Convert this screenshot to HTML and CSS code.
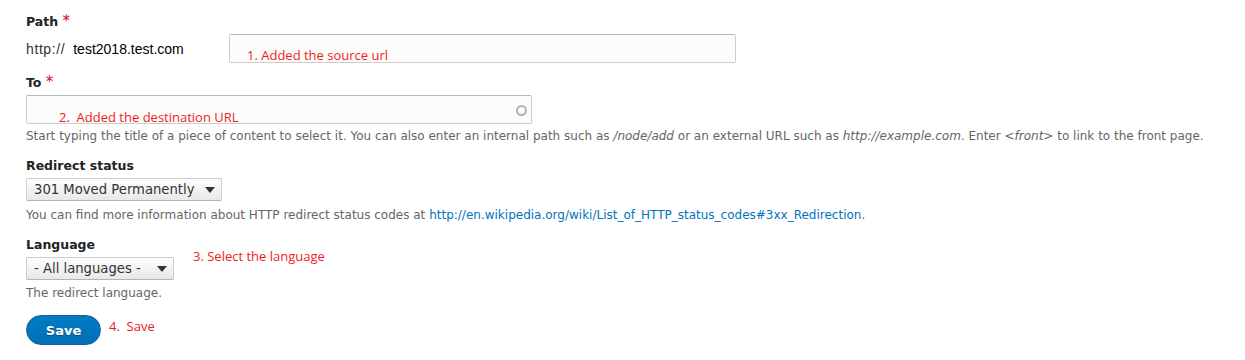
FILE: index.html
```html
<!DOCTYPE html>
<html lang="en">
<head>
  <meta charset="UTF-8">
  <meta name="viewport" content="width=device-width, initial-scale=1.0">
  <title>Add redirect</title>
  <link rel="stylesheet" href="styles.css">
</head>
<body>
  <form class="redirect-form">
    <div class="form-item">
      <label class="label" for="source">Path <span class="req">*</span></label>
      <div class="source-row">
        <span class="prefix"><span class="scheme">http://</span><span class="host">test2018.test.com</span></span>
        <div class="field-wrap">
          <input type="text" id="source" class="text-input source-input">
          <span class="note note-source">1. Added the source url</span>
        </div>
      </div>
    </div>

    <div class="form-item item-to">
      <label class="label" for="dest">To <span class="req">*</span></label>
      <div class="field-wrap">
        <input type="text" id="dest" class="text-input dest-input">
        <span class="throbber"></span>
        <span class="note note-dest">2.&nbsp; Added the destination URL</span>
      </div>
      <div class="description">Start typing the title of a piece of content to select it. You can also enter an internal path such as <em>/node/add</em> or an external URL such as <em>http://example.com</em>. Enter <em>&lt;front&gt;</em> to link to the front page.</div>
    </div>

    <div class="form-item item-status">
      <label class="label" for="status">Redirect status</label>
      <div class="select status-select">301 Moved Permanently <span class="arrow"></span></div>
      <div class="description">You can find more information about HTTP redirect status codes at <a href="#">http://en.wikipedia.org/wiki/List_of_HTTP_status_codes#3xx_Redirection</a>.</div>
    </div>

    <div class="form-item item-lang">
      <label class="label" for="lang">Language</label>
      <div class="select-row">
        <div class="select lang-select">- All languages - <span class="arrow"></span></div>
        <span class="note note-lang">3. Select the language</span>
      </div>
      <div class="description">The redirect language.</div>
    </div>

    <div class="actions">
      <button type="button" class="button-primary">Save</button>
      <span class="note note-save">4.&nbsp; Save</span>
    </div>
  </form>
</body>
</html>
```

FILE: styles.css
```css
body {
  margin: 0;
  background-color: #ffffff;
  font-family: "DejaVu Sans", "Lucida Grande", sans-serif;
  color: #333;
}
.redirect-form {
  padding: 13px 26px 0 26px;
}
.label {
  display: block;
  font-weight: bold;
  font-size: 12.5px;
  line-height: 16px;
  color: #222;
}
.req {
  color: #e0001b;
  font-size: 15px;
  font-weight: normal;
}
.source-row {
  display: flex;
  align-items: center;
  margin-top: 4px;
  height: 29px;
}
.prefix {
  width: 203px;
  font-family: "Liberation Sans", Arial, sans-serif;
  font-size: 14px;
  color: #333;
}
.scheme {
  letter-spacing: 0.6px;
}
.host {
  color: #000;
  margin-left: 8px;
}
.field-wrap {
  position: relative;
  display: inline-block;
}
.text-input {
  display: block;
  box-sizing: border-box;
  height: 29px;
  background-color: #fcfcfa;
  border: 1px solid #ccc;
  border-top-color: #b8b8b8;
  border-radius: 2px;
  padding: 4px 8px;
  margin: 0;
}
.source-input {
  width: 507px;
}
.dest-input {
  width: 506px;
}
.item-to {
  margin-top: 11px;
}
.item-to .label {
  margin-bottom: 4px;
}
.item-to .field-wrap {
  display: block;
  width: 506px;
}
.throbber {
  position: absolute;
  right: 5px;
  top: 10px;
  width: 7px;
  height: 7px;
  border: 2px solid #b0b0b0;
  border-radius: 50%;
}
.note {
  font-family: "Open Sans", "Liberation Sans", sans-serif;
  font-size: 13px;
  color: #ee1c25;
  white-space: nowrap;
}
.note-source {
  position: absolute;
  left: 18px;
  top: 12px;
}
.note-dest {
  position: absolute;
  left: 33px;
  top: 13px;
}
.description {
  font-size: 12px;
  line-height: 16px;
  color: #666;
}
.item-to .description {
  margin-top: 4px;
}
.description em {
  font-style: italic;
}
.description a {
  color: #0074bd;
  text-decoration: none;
}
.item-status {
  margin-top: 14px;
}
.select {
  display: inline-flex;
  align-items: center;
  justify-content: space-between;
  box-sizing: border-box;
  height: 23px;
  margin-top: 4px;
  padding: 0 6px 0 7px;
  font-size: 13.2px;
  white-space: nowrap;
  color: #333;
  background: linear-gradient(#fefefe, #e8e8e6);
  border: 1px solid #ccc;
  border-bottom-color: #b4b4b4;
  border-radius: 2px;
}
.status-select {
  width: 196px;
}
.lang-select {
  width: 148px;
}
.arrow {
  width: 0;
  height: 0;
  border-left: 5px solid transparent;
  border-right: 5px solid transparent;
  border-top: 6px solid #333;
  margin-left: 6px;
}
.item-status .description {
  margin-top: 6px;
}
.item-lang {
  margin-top: 14px;
}
.select-row {
  display: flex;
  align-items: flex-start;
}
.note-lang {
  margin-left: 19px;
  margin-top: -6px;
}
.item-lang .description {
  margin-top: 5px;
}
.actions {
  display: flex;
  align-items: flex-start;
  margin-top: 14px;
}
.button-primary {
  width: 75px;
  height: 30px;
  border: 1px solid #1e5c90;
  border-radius: 15px;
  background: linear-gradient(#007bc6, #0071b8);
  color: #fff;
  font-family: "DejaVu Sans", sans-serif;
  font-weight: bold;
  font-size: 13px;
  text-shadow: 0 1px 1px #124a7a;
  padding: 0;
}
.note-save {
  margin-left: 8px;
  margin-top: 2px;
}
```
